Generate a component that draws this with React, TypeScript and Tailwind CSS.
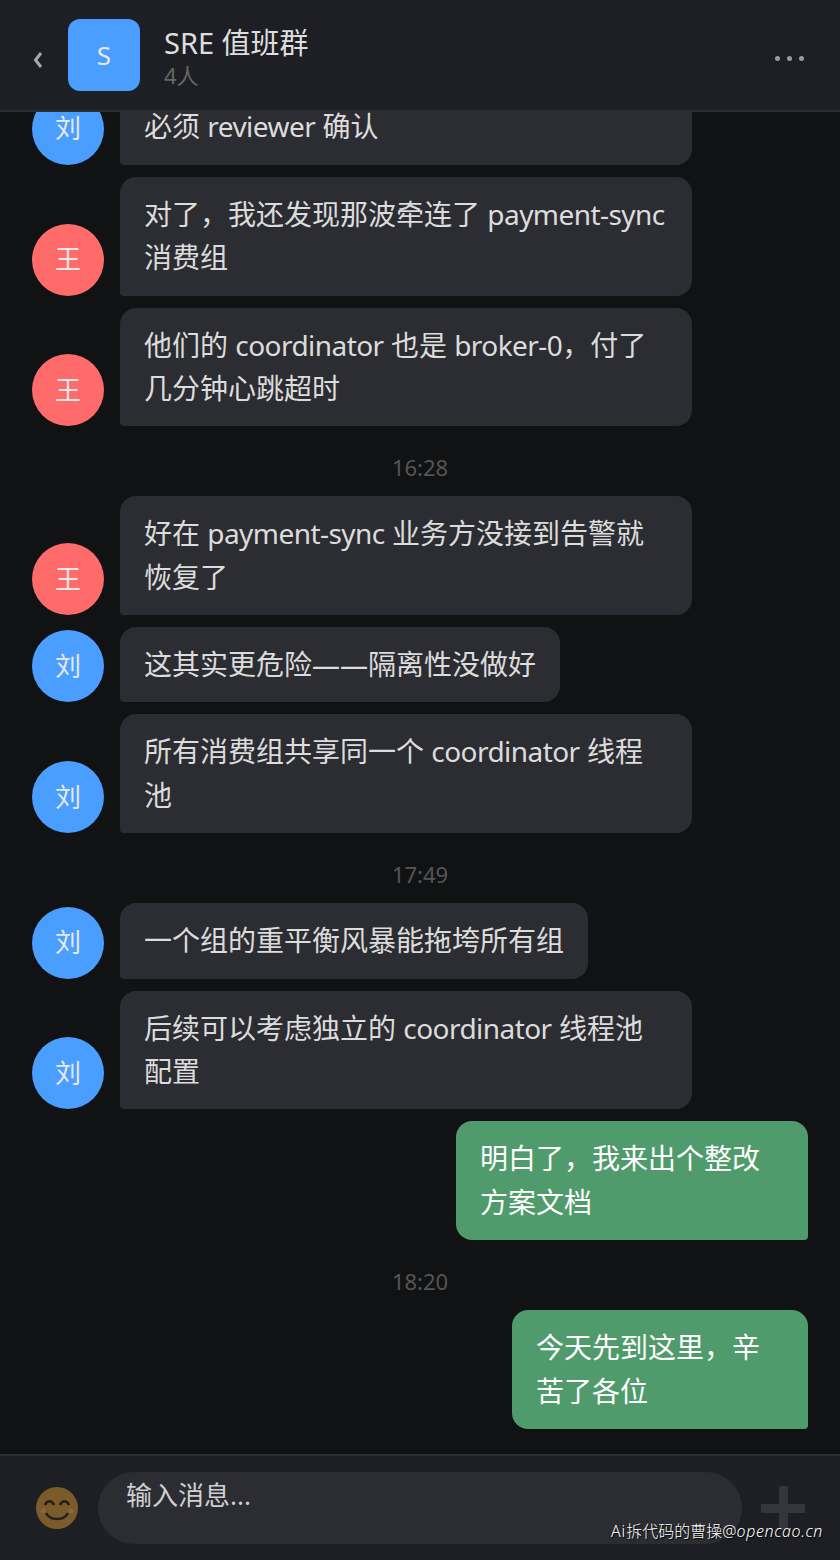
import React from 'react';

const FONT = '"Noto Sans", "Noto Sans CJK SC", sans-serif';

type Item =
  | { kind: 'time'; text: string }
  | { kind: 'in'; who: '刘' | '王'; lines: string; w?: string }
  | { kind: 'out'; lines: string; w: string };

const ITEMS: Item[] = [
  { kind: 'in', who: '刘', lines: '必须 reviewer 确认', w: 'w-[572px]' },
  { kind: 'in', who: '王', lines: '对了，我还发现那波牵连了 payment-sync 消费组' },
  { kind: 'in', who: '王', lines: '他们的 coordinator 也是 broker-0，付了几分钟心跳超时' },
  { kind: 'time', text: '16:28' },
  { kind: 'in', who: '王', lines: '好在 payment-sync 业务方没接到告警就恢复了' },
  { kind: 'in', who: '刘', lines: '这其实更危险——隔离性没做好' },
  { kind: 'in', who: '刘', lines: '所有消费组共享同一个 coordinator 线程池' },
  { kind: 'time', text: '17:49' },
  { kind: 'in', who: '刘', lines: '一个组的重平衡风暴能拖垮所有组' },
  { kind: 'in', who: '刘', lines: '后续可以考虑独立的 coordinator 线程池配置' },
  { kind: 'out', lines: '明白了，我来出个整改方案文档', w: 'w-[352px]' },
  { kind: 'time', text: '18:20' },
  { kind: 'out', lines: '今天先到这里，辛苦了各位', w: 'w-[296px]' },
];

// latin runs sit a bit tighter than the CJK around them
const Text = ({ value }: { value: string }) => (
  <>
    {value.split(/([A-Za-z0-9-]+)/).map((part, i) =>
      i % 2 ? (
        <span key={i} className="tracking-[-0.55px] whitespace-nowrap">{part}</span>
      ) : (
        part
      )
    )}
  </>
);

const Avatar = ({ who }: { who: string }) => (
  <div className={`w-[72px] h-[72px] shrink-0 rounded-full flex items-center justify-center text-[26px] text-[#e8e8e8] ${who === '王' ? 'bg-[#ff6b6b]' : 'bg-[#4a9eff]'}`}>
    {who}
  </div>
);

const Message = ({ item }: { item: Item }) => {
  if (item.kind === 'time') {
    return <div className="text-center text-[22px] leading-[30px] text-[#555555] mt-[14px] mb-[2px]">{item.text}</div>;
  }
  if (item.kind === 'out') {
    return (
      <div className="flex justify-end">
        <div className={`${item.w} px-6 py-4 bg-[#4f9b6b] text-white text-[28px] leading-[1.55] rounded-2xl rounded-br-[4px]`}>{item.lines}</div>
      </div>
    );
  }
  return (
    <div className="flex items-end gap-4">
      <Avatar who={item.who} />
      <div className={`${item.w ?? ''} max-w-[572px] px-6 py-4 bg-[#2c2d32] text-[#dcdcdc] text-[28px] leading-[1.55] rounded-2xl rounded-bl-[4px]`}>
        <Text value={item.lines} />
      </div>
    </div>
  );
};

export default function App() {
  return (
    <div className="relative w-[840px] h-[1560px] flex flex-col overflow-hidden bg-[#111214]" style={{ fontFamily: FONT }}>
      <header className="relative z-10 h-[112px] shrink-0 flex items-center pl-8 pr-8 bg-[#1e1f24] border-b-2 border-[#2c2d32]">
        <svg width="12" height="20" viewBox="0 0 12 20" className="shrink-0 mt-[10px]" fill="none">
          <path d="M9 3L3.5 10L9 17" stroke="#a8a8a8" strokeWidth="3" />
        </svg>
        <div className="ml-6 w-[72px] h-[72px] rounded-xl bg-[#4a9eff] flex items-center justify-center text-[26px] text-[#e8e8e8]">S</div>
        <div className="ml-6 flex-1 pt-[1px]">
          <div className="text-[29px] leading-[40px] text-[#dedede]">SRE 值班群</div>
          <div className="text-[22px] leading-[28px] text-[#666666] -mt-[2px]">4人</div>
        </div>
        <div className="flex gap-[7px] mr-[4px] mt-[6px]">
          <span className="w-[5px] h-[5px] rounded-full bg-[#9a9a9e]" />
          <span className="w-[5px] h-[5px] rounded-full bg-[#9a9a9e]" />
          <span className="w-[5px] h-[5px] rounded-full bg-[#9a9a9e]" />
        </div>
      </header>

      <main className="flex-1 min-h-0 overflow-hidden flex flex-col justify-end gap-3 pl-8 pr-8 pb-[25px]">
        {ITEMS.map((item, i) => (
          <Message key={i} item={item} />
        ))}
      </main>

      <footer className="h-[106px] shrink-0 flex items-center pl-9 bg-[#1e1f24] border-t-2 border-[#2c2d32]">
        <svg width="42" height="42" viewBox="0 0 42 42" className="shrink-0">
          <circle cx="21" cy="21" r="21" fill="#7c5b2a" />
          <path d="M9 18c2-5 7-5 9 0M24 18c2-5 7-5 9 0" stroke="#23201b" strokeWidth="2.5" fill="none" />
          <path d="M10 26c4 8 18 8 22 0" stroke="#23201b" strokeWidth="2.5" fill="none" />
          <circle cx="7" cy="24" r="2.5" fill="#8a6a3c" />
          <circle cx="35" cy="24" r="2.5" fill="#8a6a3c" />
        </svg>
        <div className="ml-5 w-[644px] h-[72px] rounded-[36px] bg-[#2c2d32] px-7 py-1 text-[26px] leading-[38px] text-[#d0d0d0]">输入消息...</div>
        <svg width="44" height="44" viewBox="0 0 44 44" className="ml-[19px] shrink-0">
          <path d="M20 0h5a2 2 0 0 1 2 2v16h17v9H27v17h-9V27H0v-9h18V2a2 2 0 0 1 2-2z" fill="#35363b" />
        </svg>
      </footer>

      <div className="absolute right-[17px] bottom-[16px] text-[16px] leading-[26px] font-light text-white" style={{ textShadow: '1px 1px 1px #000' }}>
        <span className="tracking-[1px]">Ai</span>拆代码的曹操@<span className="italic tracking-[0.6px]">opencao.cn</span>
      </div>
    </div>
  );
}
